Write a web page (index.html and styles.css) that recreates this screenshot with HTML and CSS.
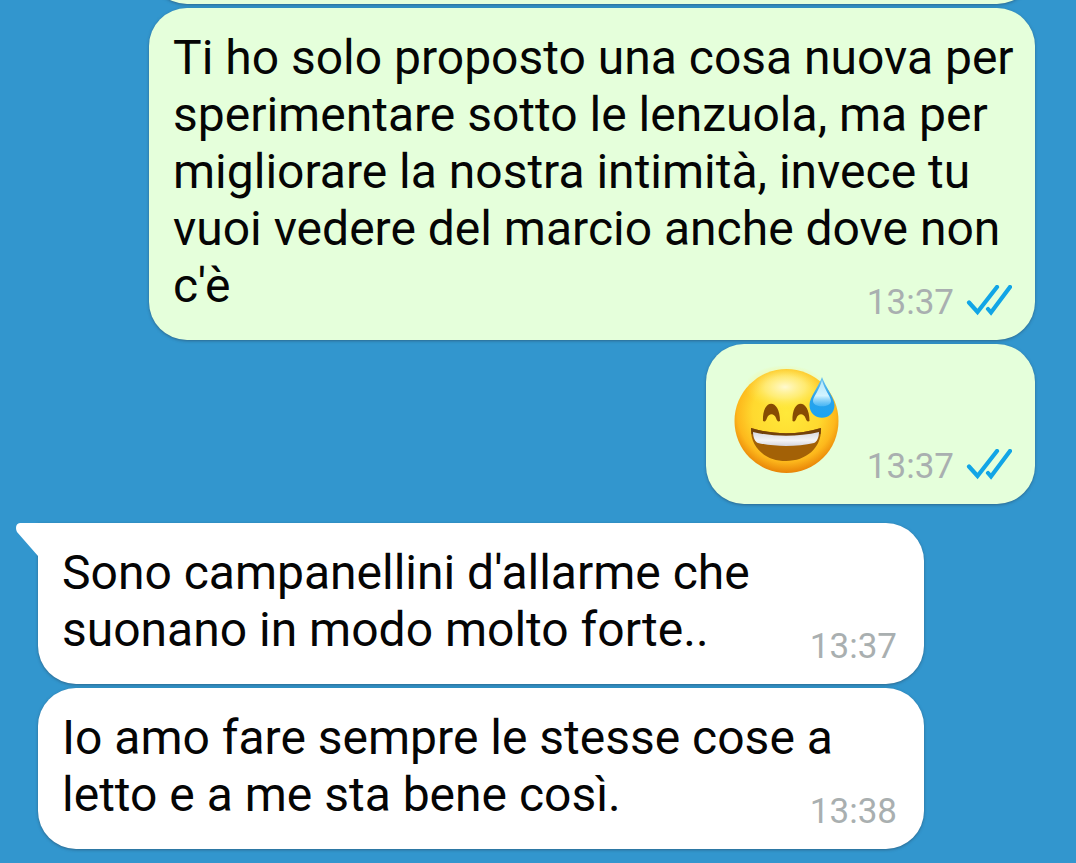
FILE: index.html
```html
<!DOCTYPE html>
<html lang="it">
<head>
    <meta charset="UTF-8">
    <meta name="viewport" content="width=device-width, initial-scale=1.0">
    <title>Chat</title>
    <link rel="stylesheet" href="styles.css">
</head>
<body>
<svg class="defs" aria-hidden="true">
    <symbol id="ticks" viewBox="0 0 46 32">
        <path d="M3 14.500 L11.500 24 L31 -1 M22 21 L25 24.500 L44 -1" transform="translate(0 3)" fill="none" stroke="#12a5e6" stroke-width="4.200" stroke-linecap="round"/>
    </symbol>
</svg>
<main class="chat">
    <div class="bubble out previous"></div>
    <div class="bubble out">
        <p>Ti ho solo proposto una cosa nuova per sperimentare sotto le lenzuola, ma per migliorare la nostra intimità, invece tu vuoi vedere del marcio anche dove non c'è</p>
        <div class="meta"><time>13:37</time><svg class="ticks" role="img" aria-label="Letto"><use href="#ticks"/></svg></div>
    </div>
    <div class="bubble out sticker">
        <svg class="emoji" viewBox="0 0 113 113" role="img" aria-label="Faccina che ride sudando">
            <defs>
                <radialGradient id="face" cx="50%" cy="42%" r="59%">
                    <stop offset="0" stop-color="#ffe93a"/>
                    <stop offset=".55" stop-color="#ffd92f"/>
                    <stop offset=".8" stop-color="#fdb81c"/>
                    <stop offset="1" stop-color="#e67e05"/>
                </radialGradient>
                <radialGradient id="shine">
                    <stop offset="0" stop-color="#fffbd8" stop-opacity=".95"/>
                    <stop offset=".5" stop-color="#fff6a0" stop-opacity=".6"/>
                    <stop offset="1" stop-color="#ffed50" stop-opacity="0"/>
                </radialGradient>
                <linearGradient id="drop" x1="0" y1="0" x2="0" y2="1">
                    <stop offset="0" stop-color="#6cc3ee"/>
                    <stop offset=".5" stop-color="#2ba2ea"/>
                    <stop offset="1" stop-color="#1ba4f2"/>
                </linearGradient>
                <linearGradient id="gleam" x1="0" y1="0" x2="0" y2="1">
                    <stop offset="0" stop-color="#b5e6f9"/>
                    <stop offset=".6" stop-color="#d2f3ff"/>
                    <stop offset="1" stop-color="#6cc9fb" stop-opacity=".5"/>
                </linearGradient>
                <linearGradient id="teeth" x1="0" y1="0" x2="0" y2="1">
                    <stop offset="0" stop-color="#d9d9df"/>
                    <stop offset=".6" stop-color="#f4f4f6"/>
                    <stop offset="1" stop-color="#d5d5dc"/>
                </linearGradient>
            </defs>
            <circle cx="56.500" cy="56" r="52" fill="url(#face)"/>
            <ellipse cx="55" cy="22" rx="40" ry="22" fill="url(#shine)" clip-path="circle(50px)"/>
            <path d="M33 56 C32 33 50 33 50 56 C48 57 47 56 46 53 C44 48 39 48 37 53 C36 56 35 57 33 56Z" fill="#874b03"/>
            <path d="M62.500 56 C61.500 33 79.500 33 79.500 56 C77.500 57 76.500 56 75.500 53 C73.500 48 68.500 48 66.500 53 C65.500 56 64.500 57 62.500 56Z" fill="#874b03"/>
            <path d="M21 63 C44 70 68 70 91 63 C92 82 77 96 56 96 C35 96 20 82 21 63Z" fill="#a36106"/>
            <path d="M21 63 C44 70 68 70 91 63 L90.500 69 Q56 76 21.500 69Z" fill="#74420a"/>
            <path d="M23 67 C44 72 68 72 89 67 C89 72 87 77 84 78 C67 82 45 82 28 78 C25 77 23 72 23 67Z" fill="url(#teeth)"/>
            <path d="M92 12 C95 21 104.500 33 104.500 40 C104.500 57 79.500 57 79.500 40 C79.500 32 89 21 92 12Z" fill="url(#drop)"/>
            <path d="M92 15 C94 24 101 32 101 36 C101 43 83 43 83 36 C83 32 90 24 92 15Z" fill="url(#gleam)"/>
        </svg>
        <div class="meta"><time>13:37</time><svg class="ticks" role="img" aria-label="Letto"><use href="#ticks"/></svg></div>
    </div>
    <div class="bubble in first">
        <svg class="tail" viewBox="0 0 24 34" aria-hidden="true"><path d="M24 0 H4 C0 0 -1 5 1 9 L22 33 L24 34Z" fill="#fff"/></svg>
        <p>Sono campanellini d'allarme che suonano in modo molto forte..</p>
        <div class="meta"><time>13:37</time></div>
    </div>
    <div class="bubble in">
        <p>Io amo fare sempre le stesse cose a letto e a me sta bene così.</p>
        <div class="meta"><time>13:38</time></div>
    </div>
</main>
</body>
</html>
```
FILE: styles.css
```css
* {
    box-sizing: border-box;
}

body {
    margin: 0;
    background-color: #3296ce;
    font-family: Roboto, "Liberation Sans", sans-serif;
}

.defs {
    display: none;
}

/* newest message stays at the bottom, older ones run off the top */
.chat {
    display: flex;
    flex-direction: column;
    justify-content: flex-end;
    gap: 4px;
    height: 100vh;
    padding: 0 41px 14px 38px;
    overflow: hidden;
}

.bubble {
    position: relative;
    flex-shrink: 0;
    max-width: calc(100% - 111px);
    padding: 21px 20px 26px 24px;
    border-radius: 38px;
    box-shadow: 0 1px 3px rgba(40, 60, 80, 0.5);
    font-size: 48px;
    line-height: 57px;
    color: #050505;
}

.bubble p {
    margin: 0;
}

.out {
    align-self: flex-end;
    background-color: #e5ffdb;
}

.in {
    align-self: flex-start;
    background-color: #fff;
}

.previous {
    width: 100%;
    height: 161px;
}

.sticker {
    padding-right: 192px;
}

.emoji {
    display: block;
    width: 113px;
    height: 113px;
}

.first {
    margin-top: 15px;
    border-top-left-radius: 0;
}

.tail {
    position: absolute;
    top: 0;
    left: -22px;
    width: 24px;
    height: 34px;
}

.meta {
    position: absolute;
    right: 23px;
    bottom: 16px;
    display: flex;
    align-items: center;
    gap: 12px;
    font-size: 35px;
    line-height: 42px;
    color: #a9afb0;
}

.in .meta {
    right: 27px;
}

.ticks {
    width: 46px;
    height: 32px;
    margin-bottom: 4px;
}
```
